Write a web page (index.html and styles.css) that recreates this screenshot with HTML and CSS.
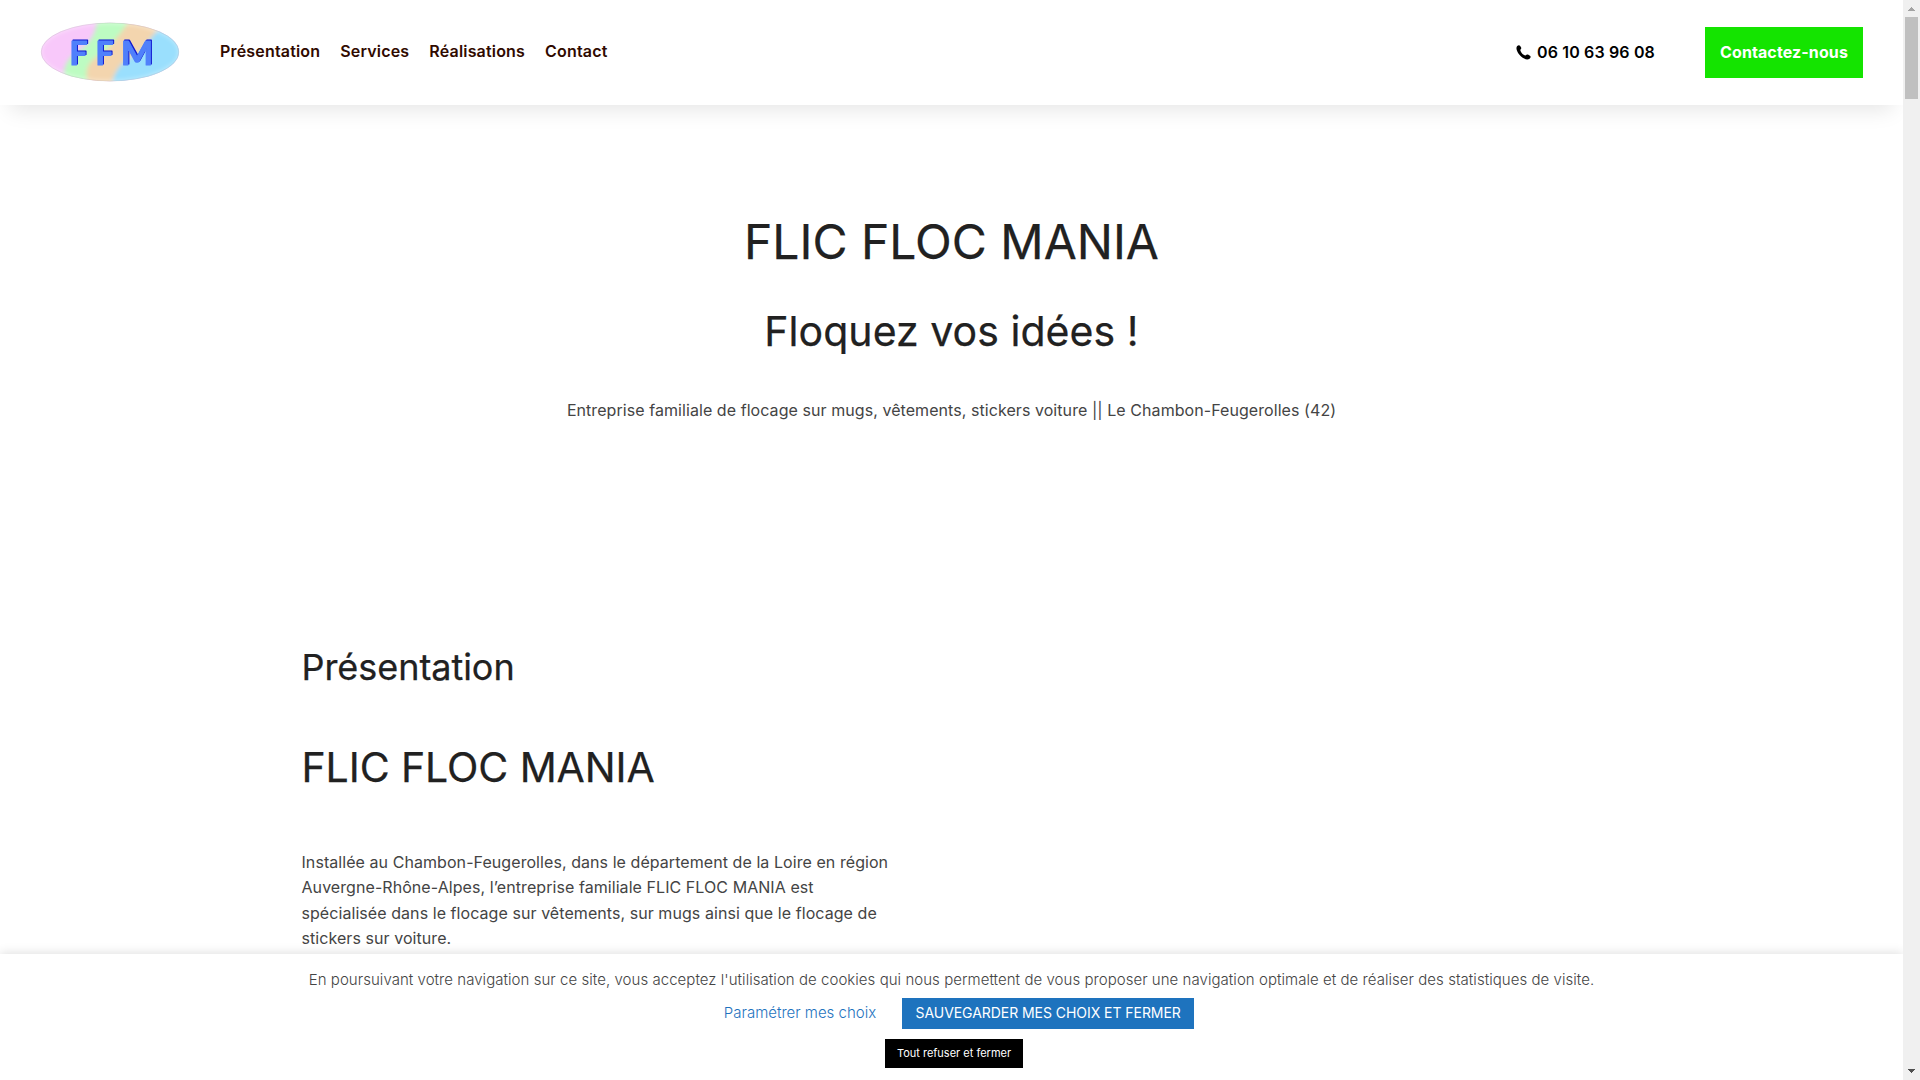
FILE: index.html
```html
<!DOCTYPE html>
<html lang="fr">
<head>
<meta charset="utf-8">
<title>FLIC FLOC MANIA</title>
<link rel="stylesheet" href="styles.css">
</head>
<body>
<div class="viewport">
  <div class="page">
    <header class="header">
      <svg class="logo" width="140" height="60" viewBox="0 0 140 60" role="img" aria-label="FFM">
        <defs>
          <clipPath id="oval"><ellipse cx="70" cy="30" rx="69" ry="29.2"/></clipPath>
          <filter id="soft" x="-20%" y="-20%" width="140%" height="140%"><feGaussianBlur stdDeviation="2.2"/></filter>
          <filter id="edge" x="-20%" y="-20%" width="140%" height="140%"><feGaussianBlur stdDeviation="2"/></filter>
        </defs>
        <g clip-path="url(#oval)">
          <rect width="140" height="60" fill="#f8c8fa"/>
          <g filter="url(#soft)">
            <path d="M58-6 C56 8 54 16 43 26 C30 34 20 42 25 66 H150 V-6Z" fill="#bdfcc2"/>
            <path d="M92-6 C84 8 78 14 68 26 C58 36 40 38 49 66 H150 V-6Z" fill="#f3d5ae"/>
            <path d="M133-6 C116 9 112 14 104 26 C94 37 76 36 71 66 H150 V-6Z" fill="#9adffd"/>
          </g>
          <ellipse cx="70" cy="30" rx="70" ry="30" fill="none" stroke="#fff" stroke-opacity=".5" stroke-width="3" filter="url(#edge)"/>
        </g>
        <ellipse cx="70" cy="30" rx="68.8" ry="29" fill="none" stroke="#999" stroke-opacity=".35" stroke-width=".6"/>
        <text class="logo-text" x="29.5" y="42.5" textLength="18" lengthAdjust="spacingAndGlyphs">F</text>
        <text class="logo-text" x="55.5" y="42.5" textLength="18" lengthAdjust="spacingAndGlyphs">F</text>
        <text class="logo-text" x="81" y="42.5" textLength="32" lengthAdjust="spacingAndGlyphs">M</text>
      </svg>
      <nav class="nav">
        <a>Présentation</a><a>Services</a><a>Réalisations</a><a>Contact</a>
      </nav>
      <a class="phone">
        <svg width="15" height="15" viewBox="0 0 15 15"><path d="M1.2 1.1 C2.1.2 3.4.1 4.2.9 L5.1 2.5 C5.6 3.4 5.1 4.2 4.3 4.8 C4.4 7.2 7.2 10.2 9.5 10.6 C10.4 9.5 11.4 9.1 12.4 9.8 L14.3 11.1 C15.1 12.2 14.3 13.3 13.2 14 C10.2 15.6 5.6 12.6 3.2 9.5 C.9 6.6-.5 3.1 1.2 1.1Z"/></svg>
        <span>06 10 63 96 08</span>
      </a>
      <a class="cta">Contactez-nous</a>
    </header>
    <main>
      <section class="hero">
        <h1>FLIC FLOC MANIA</h1>
        <h2>Floquez vos idées !</h2>
        <p>Entreprise familiale de flocage sur mugs, vêtements, stickers voiture || Le Chambon-Feugerolles (42)</p>
      </section>
      <section class="about">
        <h3>Présentation</h3>
        <h2>FLIC FLOC MANIA</h2>
        <p>Installée au Chambon-Feugerolles, dans le département de la Loire en région<br>Auvergne-Rhône-Alpes, l’entreprise familiale FLIC FLOC MANIA est<br>spécialisée dans le flocage sur vêtements, sur mugs ainsi que le flocage de<br>stickers sur voiture.</p>
      </section>
    </main>
    <div class="cookies">
      <p class="notice">En poursuivant votre navigation sur ce site, vous acceptez l'utilisation de cookies qui nous permettent de vous proposer une navigation optimale et de réaliser des statistiques de visite.</p>
      <div class="choices">
        <a class="settings">Paramétrer mes choix</a>
        <a class="save">SAUVEGARDER MES CHOIX ET FERMER</a>
      </div>
      <a class="refuse">Tout refuser et fermer</a>
    </div>
  </div>
  <div class="scrollbar">
    <svg width="7" height="4" viewBox="0 0 7 4" shape-rendering="crispEdges"><path d="M3 0h1v1h1v1h1v1h1v1H0V3h1V2h1V1h1z" fill="#a3a3a3"/></svg>
    <div class="thumb"></div>
    <svg class="down" width="7" height="4" viewBox="0 0 7 4" shape-rendering="crispEdges"><path d="M0 0h7v1H6v1H5v1H4v1H3V3H2V2H1V1H0z" fill="#505050"/></svg>
  </div>
</div>
</body>
</html>
```
FILE: styles.css
```css
* { box-sizing: border-box; }
body { margin: 0; background: #fff; color: #444; font: 400 16px/25.6px Inter, sans-serif; font-optical-sizing: none; overflow: hidden; }
h1, h2, h3, p { margin: 0; font-weight: 400; white-space: nowrap; }
.viewport { display: flex; width: 1920px; height: 1080px; overflow: hidden; }
.page { display: flex; flex-direction: column; width: 1903px; height: 1080px; overflow: hidden; }
.header { display: flex; align-items: center; flex: none; height: 105px; padding: 0 40px; background: #fff; box-shadow: 0 15px 20px -10px rgba(0,0,0,.1); position: relative; z-index: 1; }
.logo { display: block; margin: 0 40px 1px 0; }
.logo-text { font: 700 32px Lato, sans-serif; fill: #5080fb; stroke: #5080fb; stroke-width: 1.2; stroke-linejoin: round; filter: drop-shadow(1.5px -.8px 0 #1018d0); }
.nav { display: flex; gap: 20px; color: #300a00; font-weight: 600; letter-spacing: .18px; }
.nav a { position: relative; top: -1px; }
.phone { display: flex; align-items: center; gap: 6px; margin-left: auto; margin-right: 50px; color: #000; font-weight: 600; letter-spacing: .15px; }
.phone svg { display: block; }
.cta { width: 158px; height: 51px; background: #14e400; color: #fff; font-weight: 700; line-height: 51px; text-align: center; letter-spacing: .1px; }
main { flex: 1; min-height: 0; overflow: hidden; letter-spacing: .065px; }
.hero { height: 495px; padding-top: 106px; text-align: center; }
h1, h2, h3 { color: #212121; letter-spacing: 0; -webkit-text-stroke: .25px #212121; }
.hero h1 { font-size: 48px; line-height: 62px; }
.hero h2 { font-size: 41px; line-height: 52px; margin-top: 32px; letter-spacing: .05px; }
.hero p { margin-top: 41px; }
.about { width: 1300px; margin: 0 auto; padding-top: 44px; }
.about h3 { font-size: 36px; line-height: 46px; letter-spacing: -.05px; }
.about h2 { font-size: 41px; line-height: 52px; margin-top: 51px; letter-spacing: -.08px; }
.about p { margin-top: 56.5px; }
.cookies { display: flex; flex-direction: column; align-items: center; flex: none; height: 126px; padding-top: 13px; background: #fff; box-shadow: 0 -1px 10px rgba(0,0,0,.13); position: relative; font-size: 15px; font-weight: 300; }
.notice { font-weight: 300; letter-spacing: .045px; }
.choices { display: flex; align-items: center; gap: 26px; margin: 5px 0 0 15px; }
.settings { color: #1e73be; }
.save { width: 292px; height: 31px; background: #1e73be; color: #fff; font-size: 14px; font-weight: 400; line-height: 30px; text-align: center; letter-spacing: -.05px; }
.refuse { width: 138px; height: 29px; margin: 10px 0 0 5px; background: #000; color: #fff; font-size: 11px; font-weight: 400; line-height: 29px; text-align: center; }
.scrollbar { display: flex; flex-direction: column; align-items: center; width: 17px; height: 1080px; padding: 7px 0; background: #f0f0f0; }
.thumb { width: 13px; height: 82px; margin-top: 6px; background: #c0c0c0; }
.down { margin-top: auto; }
```
